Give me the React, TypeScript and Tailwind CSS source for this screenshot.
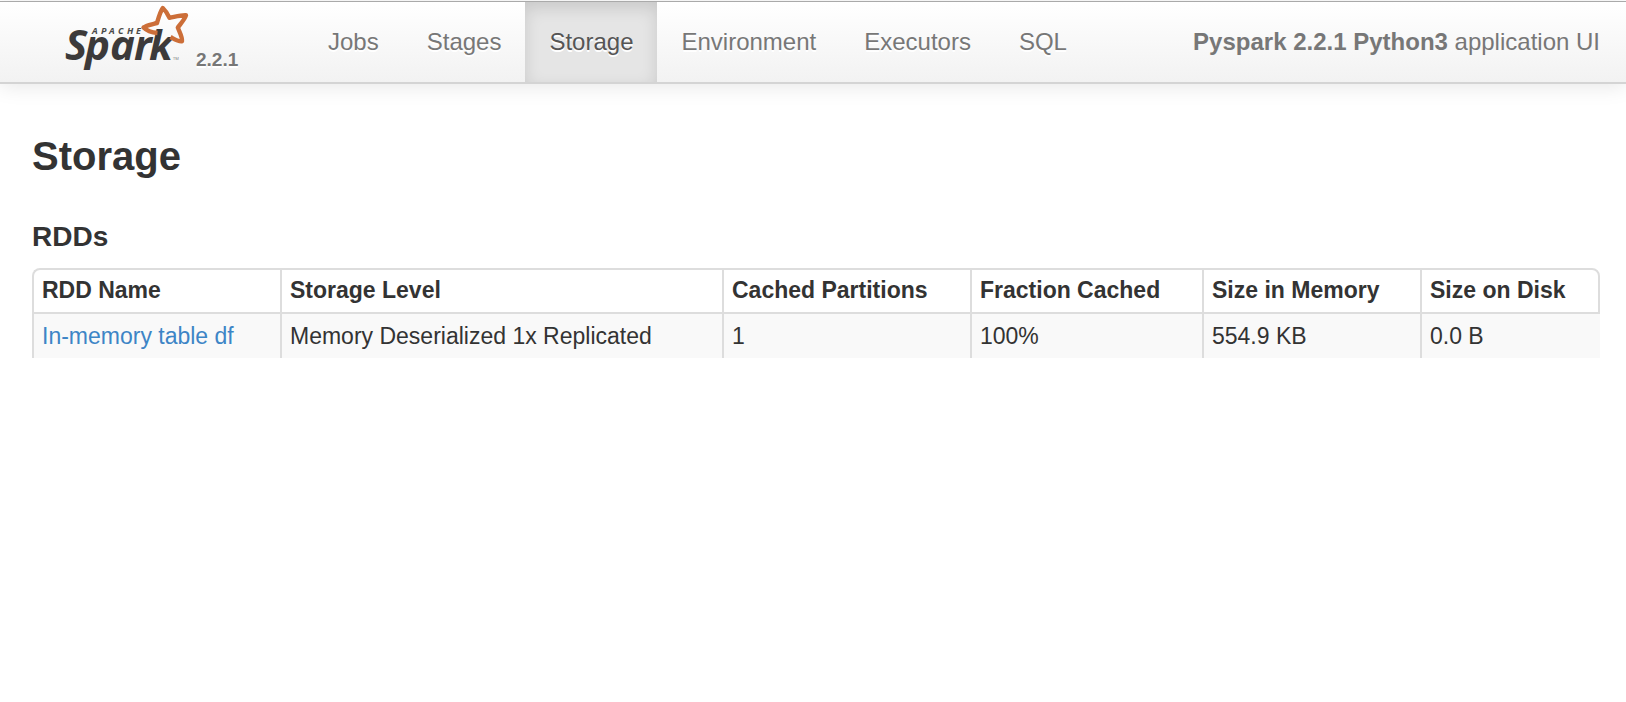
import React from 'react';

interface Rdd {
  id: number;
  name: string;
  storageLevel: string;
  cachedPartitions: number;
  fractionCached: string;
  memorySize: string;
  diskSize: string;
}

const tabs = ['Jobs', 'Stages', 'Storage', 'Environment', 'Executors', 'SQL'];

const columns = [
  { label: 'RDD Name', width: 'w-[248px]' },
  { label: 'Storage Level', width: 'w-[442px]' },
  { label: 'Cached Partitions', width: 'w-[248px]' },
  { label: 'Fraction Cached', width: 'w-[232px]' },
  { label: 'Size in Memory', width: 'w-[218px]' },
  { label: 'Size on Disk', width: 'w-[180px]' },
];

const rdds: Rdd[] = [
  {
    id: 1,
    name: 'In-memory table df',
    storageLevel: 'Memory Deserialized 1x Replicated',
    cachedPartitions: 1,
    fractionCached: '100%',
    memorySize: '554.9 KB',
    diskSize: '0.0 B',
  },
];

const SparkLogo = () => (
  <svg
    width="128"
    height="72"
    viewBox="0 0 128 72"
    role="img"
    aria-label="Apache Spark"
    className="overflow-visible"
    fontFamily="'Open Sans', sans-serif"
  >
    <text y="32" fill="#4a4a48" fontSize="9" fontWeight="700" fontStyle="italic">
      <tspan x="28 37 45 54 63 72">APACHE</tspan>
    </text>
    <text y="58" fill="#3c3a3a" fontSize="42" fontWeight="700" fontStyle="italic">
      <tspan x="1 21 46 70 85">Spark</tspan>
    </text>
    <text x="109" y="58" fill="#777" fontSize="4">
      TM
    </text>
    {/* star, left open where the k runs into it */}
    <path
      d="M93.5 31 C88 30.5 82 28 79.5 25.5 C82 23.3 88 22.3 93 21 C94.5 16 96 10 98.8 6 C101.5 8.5 104 12.5 105.5 15.8 C111 14.8 117 13 122 13.3 C121 17 117 21.5 113.8 25.5 C115.5 30 118.5 35 118 39.2 C114 39.7 111 37.5 106.5 35"
      fill="none"
      stroke="#cc6e38"
      strokeWidth="4.4"
      strokeLinejoin="round"
    />
  </svg>
);

const Navbar = () => (
  <header className="pt-px">
    <div className="flex h-[83px] items-stretch border-t border-t-[#aaaaaa] border-b-2 border-b-[#d4d4d4] bg-linear-to-b from-white to-[#f2f2f2] shadow-[0_2px_20px_rgba(0,0,0,0.1)]">
      <a href="#" className="flex w-[304px] shrink-0 items-start pl-16 text-[#777777]">
        <SparkLogo />
        <span className="mt-11 pl-1 text-[19px] leading-7 font-bold [text-shadow:0_2px_0_#ffffff]">2.2.1</span>
      </a>
      <nav className="flex">
        {tabs.map((tab) => (
          <a
            key={tab}
            href="#"
            className={
              tab === 'Storage'
                ? 'bg-[#e5e5e5] px-6 pt-5 text-2xl leading-10 text-[#555555] shadow-[inset_0_6px_16px_rgba(0,0,0,0.125)] [text-shadow:0_2px_0_#ffffff]'
                : 'px-6 pt-5 text-2xl leading-10 text-[#777777] [text-shadow:0_2px_0_#ffffff]'
            }
          >
            {tab}
          </a>
        ))}
      </nav>
      <p className="ml-auto pt-5 pr-[26px] text-2xl leading-10 whitespace-nowrap text-[#777777]">
        <strong>Pyspark 2.2.1 Python3</strong> application UI
      </p>
    </div>
  </header>
);

const RddTable = () => (
  <table className="w-full table-fixed border-separate border-spacing-0 text-left text-[23px]">
    <thead>
      <tr>
        {columns.map(({ label, width }) => (
          <th
            key={label}
            className={`${width} h-[46px] border-y-2 border-l-2 border-[#dddddd] px-2 pb-0.5 leading-9 font-bold whitespace-nowrap first:rounded-tl-lg last:rounded-tr-lg last:border-r-2`}
          >
            {label}
          </th>
        ))}
      </tr>
    </thead>
    <tbody>
      {rdds.map((rdd) => (
        <tr key={rdd.id} className="bg-[#f9f9f9] *:h-11 *:border-l-2 *:border-[#dddddd] *:px-2 *:leading-9">
          <td>
            <a href="#" className="text-[#3d85c6]">
              {rdd.name}
            </a>
          </td>
          <td>{rdd.storageLevel}</td>
          <td>{rdd.cachedPartitions}</td>
          <td>{rdd.fractionCached}</td>
          <td>{rdd.memorySize}</td>
          <td>{rdd.diskSize}</td>
        </tr>
      ))}
    </tbody>
  </table>
);

export default function App() {
  return (
    <div className="min-h-screen bg-white font-['Liberation_Sans',Arial,sans-serif] text-[#333333]">
      <Navbar />
      <main className="pt-8 pr-[26px] pl-8">
        <h1 className="text-[40px] leading-20 font-bold">Storage</h1>
        <h2 className="mt-5 mb-[10px] text-[28px] leading-[42px] font-bold">RDDs</h2>
        <RddTable />
      </main>
    </div>
  );
}
